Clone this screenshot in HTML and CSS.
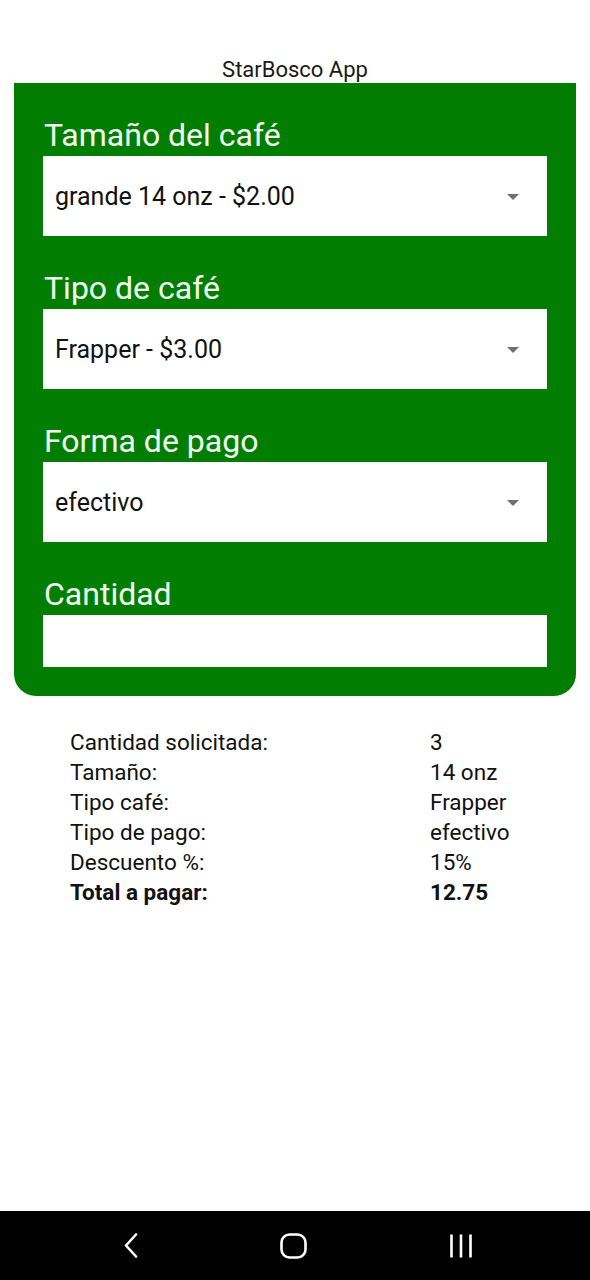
FILE: index.html
```html
<!DOCTYPE html>
<html lang="es">
<head>
<meta charset="utf-8">
<title>StarBosco App</title>
<link rel="stylesheet" href="styles.css">
</head>
<body>
<div class="screen">
  <header class="title">StarBosco App</header>
  <section class="card">
    <div class="field">
      <label class="label">Tamaño del café</label>
      <div class="select"><span>grande 14 onz - $2.00</span><span class="arrow"></span></div>
    </div>
    <div class="field">
      <label class="label">Tipo de café</label>
      <div class="select"><span>Frapper - $3.00</span><span class="arrow"></span></div>
    </div>
    <div class="field">
      <label class="label">Forma de pago</label>
      <div class="select"><span>efectivo</span><span class="arrow"></span></div>
    </div>
    <div class="field last">
      <label class="label">Cantidad</label>
      <div class="input"></div>
    </div>
  </section>
  <section class="summary">
    <div>Cantidad solicitada:</div><div>3</div>
    <div>Tamaño:</div><div>14 onz</div>
    <div>Tipo café:</div><div>Frapper</div>
    <div>Tipo de pago:</div><div>efectivo</div>
    <div>Descuento %:</div><div>15%</div>
    <div class="bold">Total a pagar:</div><div class="bold">12.75</div>
  </section>
  <nav class="navbar">
    <svg class="nav-icon" width="14" height="25" viewBox="0 0 14 25"><path d="M12 1.5 L2 12.5 L12 23.5" fill="none" stroke="#fff" stroke-width="2.6" stroke-linecap="round" stroke-linejoin="round"/></svg>
    <svg class="nav-icon" width="27" height="26" viewBox="0 0 27 26"><rect x="1.5" y="1.5" width="24" height="23" rx="8" fill="none" stroke="#fff" stroke-width="2.6"/></svg>
    <svg class="nav-icon" width="24" height="26" viewBox="0 0 24 26"><path d="M2.5 1.5 V24.5 M12 1.5 V24.5 M21.5 1.5 V24.5" fill="none" stroke="#fff" stroke-width="2.6"/></svg>
  </nav>
</div>
</body>
</html>
```

FILE: styles.css
```css
html, body {
  margin: 0;
  padding: 0;
  background: #fff;
}
.screen {
  width: 590px;
  min-height: 1280px;
  display: flex;
  flex-direction: column;
  font-family: Roboto, "Noto Sans", sans-serif;
  color: #111;
}
.title {
  padding-top: 57px;
  height: 26px;
  font-size: 22px;
  line-height: 26px;
  text-align: center;
  color: #1a1a1a;
}
.card {
  margin: 0 14px;
  background: #017e01;
  border-radius: 0 0 22px 22px;
  padding: 37px 29px 29px 29px;
  display: flex;
  flex-direction: column;
  gap: 37px;
}
.field {
  display: flex;
  flex-direction: column;
  gap: 5px;
}
.label {
  font-size: 32px;
  line-height: 31px;
  color: #f2fff2;
  padding-left: 1px;
}
.select {
  height: 80px;
  background: #fff;
  display: flex;
  align-items: center;
  justify-content: space-between;
  padding: 0 28px 0 12px;
  font-size: 25px;
  color: #111;
}
.arrow {
  width: 0;
  height: 0;
  border-left: 6px solid transparent;
  border-right: 6px solid transparent;
  border-top: 6px solid #6f6f6f;
  margin-top: 1px;
}
.input {
  height: 52px;
  background: #fff;
}
.summary {
  margin-top: 31px;
  padding-left: 70px;
  display: grid;
  grid-template-columns: 360px 1fr;
  font-size: 22.5px;
  line-height: 30px;
  color: #111;
}
.bold {
  font-weight: 700;
}
.navbar {
  margin-top: auto;
  height: 69px;
  background: #000;
  display: flex;
  align-items: center;
  justify-content: space-between;
  padding: 0 117px 0 124px;
}
.nav-icon {
  display: block;
}
```
